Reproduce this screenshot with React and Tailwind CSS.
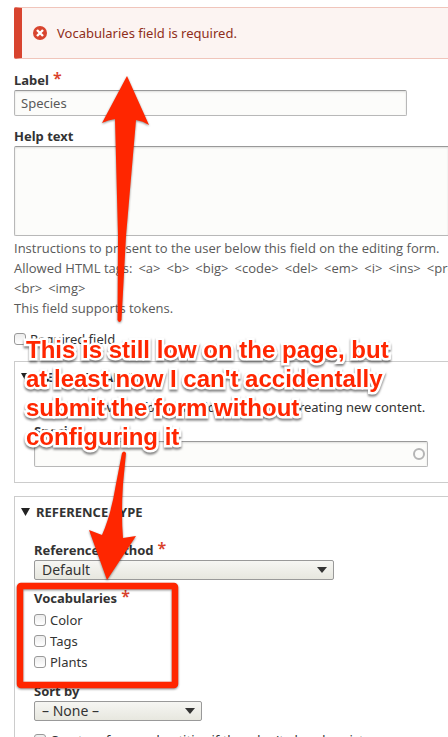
import React, { useState } from "react";

const vocabularies = ["Color", "Tags", "Plants"];

const allowedTags = ["<a>", "<b>", "<big>", "<code>", "<del>", "<em>", "<i>", "<ins>", "<pre>"];

const field =
    "block border border-[#b8b8b8] border-t-[#999] rounded-[2px] bg-[#fcfcfa] text-[#595959] shadow-[inset_0_1px_2px_rgba(0,0,0,0.12)]";

function Required() {
    return <span className="ml-1 text-base leading-4 font-semibold text-[#d9412b]">*</span>;
}

function FieldLabel({ htmlFor, required, children }) {
    return (
        <label htmlFor={htmlFor} className="flex h-5 font-bold leading-5 text-[#333]">
            {children}
            {required && <Required />}
        </label>
    );
}

function Checkbox({ id, children }) {
    return (
        <div className="flex h-[21px] items-center gap-1">
            <input
                id={id}
                type="checkbox"
                className="h-3 w-3 shrink-0 appearance-none rounded-[3px] border border-[#999] bg-linear-to-b from-[#ececec] to-white checked:bg-[#666]"
            />
            <label htmlFor={id} className="whitespace-nowrap">
                {children}
            </label>
        </div>
    );
}

function Select({ id, className, options }) {
    return (
        <div className={`relative max-w-full ${className}`}>
            <select
                id={id}
                className="block h-5 w-full appearance-none rounded-[2px] border border-[#999] bg-linear-to-b from-[#f6f6f3] to-[#e7e7df] pl-[7px] text-sm leading-4 text-[#333]"
            >
                {options.map((o) => (
                    <option key={o}>{o}</option>
                ))}
            </select>
            <svg viewBox="0 0 10 6" className="pointer-events-none absolute top-[7px] right-[7px] h-1.5 w-2.5">
                <path d="M0 0h10L5 6z" fill="#333" />
            </svg>
        </div>
    );
}

function Panel({ title, children }) {
    return (
        <details open className="border border-r-0 border-[#ccc] pt-[5px] pb-[15px] pl-[19px]">
            <summary className="-ml-[13px] flex h-5 list-none items-center gap-1.5 font-bold text-[#333]">
                <svg viewBox="0 0 9 8" className="h-2 w-[9px]">
                    <path d="M0 0h9L4.500 8z" fill="#222" />
                </svg>
                {title}
            </summary>
            {children}
        </details>
    );
}

// Red notes drawn over the form
function Annotations() {
    return (
        <div className="pointer-events-none absolute top-0 left-0">
            <svg width="448" height="737" viewBox="0 0 448 737" className="drop-shadow-[0_1px_1px_rgba(0,0,0,0.45)]">
                <g fill="#ff2600">
                    <path d="M127 76L149 125Q143 121 136 120L126 236L121.500 320Q119.500 324 117.500 320L118 236L115 119Q108 120 102 123Z" />
                    <path d="M122 453Q124 450 126 453L123 484Q121 514 123 538L136 536L107 580L89 530L102 535Q111 515 116 484Z" />
                </g>
                <rect x="20" y="586" width="155" height="99" rx="1" fill="none" stroke="#ff2600" strokeWidth="6.500" />
            </svg>
            <p className="absolute top-[335px] left-[26px] font-['Liberation_Sans',sans-serif] text-2xl leading-[29px] font-bold whitespace-nowrap text-[#ff2600] drop-shadow-[0_2px_1px_rgba(0,0,0,0.5)] [-webkit-text-stroke:5px_white] [paint-order:stroke_fill] [stroke-linejoin:round]">
                This is still low on the page, but
                <br />
                at least now I can't accidentally
                <br />
                submit the form without
                <br />
                configuring it
            </p>
        </div>
    );
}

export default function App() {
    const [label, setLabel] = useState("Species");

    return (
        <div className="relative h-screen overflow-hidden bg-white font-['Noto_Sans',sans-serif] text-[13px] leading-5 text-[#333]">
            <form className="pt-[7px] pl-3.5">
                <div
                    role="alert"
                    className="flex h-[52px] items-center gap-2.5 rounded-l-[2px] border-y border-l-8 border-y-[#f0c5bb] border-l-[#d8442f] bg-[#fcf4f2] pl-[11px] text-[#8f2e20]"
                >
                    <svg viewBox="0 0 14 14" className="h-3.5 w-3.5">
                        <circle cx="7" cy="7" r="7" fill="#d8442f" />
                        <path d="M4 4l6 6M10 4l-6 6" stroke="#fff" strokeWidth="2.400" />
                    </svg>
                    Vocabularies field is required.
                </div>

                <div className="mt-[11px]">
                    <FieldLabel htmlFor="label" required>
                        Label
                    </FieldLabel>
                    <input
                        id="label"
                        value={label}
                        onChange={(e) => setLabel(e.target.value)}
                        className={`${field} h-[26px] w-[393px] max-w-full pl-1.5`}
                    />
                </div>

                <div className="mt-2.5">
                    <FieldLabel htmlFor="help">Help text</FieldLabel>
                    <textarea id="help" className={`${field} h-[90px] w-full resize-none rounded-r-none border-r-0`} />
                    <div className="mt-0.5 font-['Open_Sans',sans-serif] whitespace-nowrap text-[#595959]">
                        <p>Instructions to present to the user below this field on the editing form.</p>
                        <p className="flex gap-1.5">
                            <span>Allowed HTML tags:</span>
                            {allowedTags.map((t) => (
                                <span key={t}>{t}</span>
                            ))}
                        </p>
                        <p className="flex gap-1.5">
                            <span>&lt;br&gt;</span>
                            <span>&lt;img&gt;</span>
                        </p>
                        <p>This field supports tokens.</p>
                    </div>
                </div>

                <div className="mt-2.5 mb-3">
                    <Checkbox id="required">Required field</Checkbox>
                </div>

                <Panel title="DEFAULT VALUE">
                    <p className="mt-2.5 mb-1 whitespace-nowrap">
                        The default value for this field, used when creating new content.
                    </p>
                    <FieldLabel htmlFor="default">Species</FieldLabel>
                    <div className="relative w-[394px] max-w-full">
                        <input id="default" className={`${field} h-[26px] w-full pr-5 pl-1.5`} />
                        <svg viewBox="0 0 12 12" className="absolute top-[7px] right-[3px] h-3 w-3">
                            <circle cx="6" cy="6" r="5" fill="none" stroke="#b5b5b5" strokeWidth="2" />
                        </svg>
                    </div>
                </Panel>

                <div className="mt-[13px]">
                    <Panel title="REFERENCE TYPE">
                        <div className="mt-[18px]">
                            <FieldLabel htmlFor="method" required>
                                Reference method
                            </FieldLabel>
                            <Select id="method" className="w-[300px]" options={["Default"]} />
                        </div>

                        <fieldset className="mt-2">
                            <legend className="mb-px flex h-5 leading-5 font-bold">
                                Vocabularies
                                <Required />
                            </legend>
                            {vocabularies.map((v) => (
                                <Checkbox key={v} id={v}>
                                    {v}
                                </Checkbox>
                            ))}
                        </fieldset>

                        <div className="mt-[9px] mb-2">
                            <FieldLabel htmlFor="sort">Sort by</FieldLabel>
                            <Select id="sort" className="w-[168px]" options={["– None –"]} />
                        </div>

                        <Checkbox id="create">Create referenced entities if they don't already exist</Checkbox>
                    </Panel>
                </div>
            </form>
            <Annotations />
        </div>
    );
}
